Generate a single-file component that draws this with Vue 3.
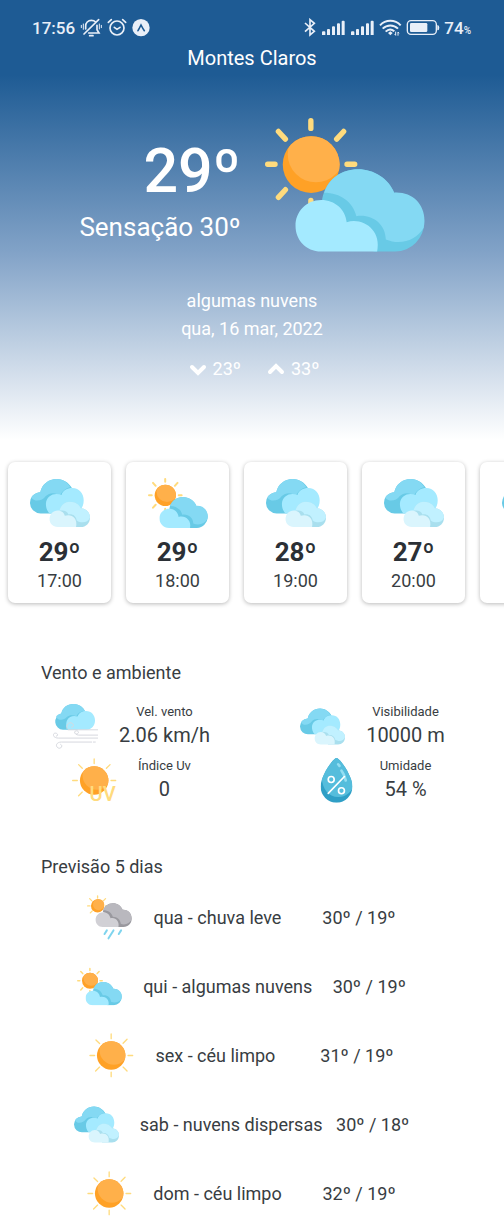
<script setup>
const hours = [
  { icon: 'clouds', temp: 29, time: '17:00' },
  { icon: 'partly', temp: 29, time: '18:00' },
  { icon: 'clouds', temp: 28, time: '19:00' },
  { icon: 'clouds', temp: 27, time: '20:00' },
  { icon: 'clouds', temp: 25, time: '21:00' },
]

const conditions = [
  { icon: 'wind', label: 'Vel. vento', value: '2.06 km/h' },
  { icon: 'clouds', label: 'Visibilidade', value: '10000 m' },
  { icon: 'uv', label: 'Índice Uv', value: '0' },
  { icon: 'drop', label: 'Umidade', value: '54 %' },
]

const days = [
  { icon: 'rain', text: 'qua - chuva leve', range: '30º / 19º' },
  { icon: 'partly', text: 'qui - algumas nuvens', range: '30º / 19º' },
  { icon: 'sun', text: 'sex - céu limpo', range: '31º / 19º' },
  { icon: 'clouds', text: 'sab - nuvens dispersas', range: '30º / 18º' },
  { icon: 'sun', text: 'dom - céu limpo', range: '32º / 19º' },
]
</script>

<template>
  <svg class="sprite" aria-hidden="true">
    <defs>
      <clipPath id="sun-clip"><circle cx="183" cy="178" r="85" /></clipPath>
      <clipPath id="sun-small-clip"><circle cx="153" cy="107" r="43" /></clipPath>
      <clipPath id="uv-clip"><circle cx="193" cy="373" r="43" /></clipPath>
      <clipPath id="drop-clip">
        <path d="M168 200C178 200 216 254 216 286A48 49 0 0 1 120 286C120 254 158 200 168 200Z" />
      </clipPath>
    </defs>

    <symbol id="cloud-pair" viewBox="135 190 388 250">
      <path class="c-shade" d="M215 290C220 233 264 192 323 192C370 192 414 220 431 262A88 88 0 1 1 434 438H370Z" />
      <path class="c-main" d="M222 262C270 262 308 290 318 332C365 325 405 355 406 402C450 420 497 405 519 367C532 305 490 258 431 262C414 220 370 192 323 192C274 192 236 220 222 262Z" />
      <path class="c-front" d="M213 438C166 438 136 402 136 361C136 320 168 284 213 284C254 284 285 312 289 350C338 335 394 374 380 438Z" />
    </symbol>

    <symbol id="partly" viewBox="45 0 478 478">
      <g class="rays" stroke-width="16">
        <path d="M182 47V70M53 177H75M290 177H313M182 285V300M85 79L106 102M280 79L259 102M106 253L85 276" />
      </g>
      <circle class="sun-dark" cx="183" cy="178" r="85" />
      <circle class="sun-light" cx="197" cy="147" r="84" clip-path="url(#sun-clip)" />
      <use href="#cloud-pair" x="135" y="190" width="388" height="250" />
    </symbol>

    <symbol id="clouds" viewBox="87 68 181 181">
      <path class="c-shade" d="M120 190A32 32 0 0 1 118 126C123 102 143 86 168 86C187 86 204 97 214 114L180 190Z" />
      <path class="c-main" d="M91 142C101 158 126 151 134 138C148 124 166 128 178 136C184 121 198 113 209 111C199 95 185 86 168 86C143 86 123 102 118 126C104 128 94 134 91 142Z" />
      <path class="c-front" d="M146 190C137 181 135 170 135 160C137 136 160 126 182 134C186 120 199 113 215 113C236 113 249 130 249 150C249 169 240 181 228 190Z" />
      <path class="c-pale-shade" d="M176 186C177 168 191 155 207 155C224 155 236 164 240 174C257 175 268 187 268 202C268 219 256 231 240 231H200Z" />
      <path class="c-pale" d="M176 182C180 165 192 155 207 155C224 155 236 164 240 174C257 175 268 187 268 202C263 217 243 222 228 211C226 196 213 190 203 193C200 183 188 179 176 182Z" />
      <path class="c-white" d="M171 231C155 231 146 220 146 207C146 193 156 181 171 181C182 181 190 188 192 197C211 190 232 203 226 231Z" />
    </symbol>

    <symbol id="sun" viewBox="86 39 136 136">
      <path class="rays" stroke-width="4" d="M153 42V56M153 157V171M89 107H103M204 107H218M107 60L118 71M201 58L189 70M106 154L118 142M201 154L189 142" />
      <circle class="sun-dark" cx="153" cy="107" r="43" />
      <circle class="sun-light" cx="161" cy="92" r="43" clip-path="url(#sun-small-clip)" />
    </symbol>

    <symbol id="rain" viewBox="171 134 136 136">
      <path class="rays" stroke-width="4" d="M203 137V143M173 167H180M226 167H233M179 145L185 151M227 145L221 151M187 182L181 188" />
      <circle class="sun-dark" cx="203" cy="167" r="20" />
      <circle class="sun-light" cx="206" cy="163" r="17" />
      <path class="g-shade" d="M219 184C223 168 235 159 249 159C263 159 274 167 279 179C295 178 306 190 306 205C306 220 296 230 281 231H260Z" />
      <path class="g-main" d="M220 180C235 180 246 188 249 200C263 200 272 209 273 221C286 227 301 219 305 209C308 190 295 178 279 179C274 167 263 159 249 159C235 159 224 168 220 180Z" />
      <path class="g-front" d="M219 231C205 231 197 220 197 209C197 196 207 186 220 186C232 186 240 194 242 204C257 200 270 213 266 231Z" />
      <path class="rain-lines" d="M231 241L224 252M251 241L236 265M274 241L267 252" />
    </symbol>

    <symbol id="wind" viewBox="66 144 136 136">
      <path class="c-shade" d="M96 222A25 25 0 0 1 91 173C95 155 109 144 127 144C144 144 158 153 164 168L140 222Z" />
      <path class="c-main" d="M75 183C84 196 100 192 107 184C117 176 128 178 137 181C140 172 151 165 162 165C155 151 142 144 127 144C109 144 95 155 91 173C83 174 77 178 75 183Z" />
      <path class="c-front" d="M112 222C104 212 105 200 109 192C115 182 127 178 140 182C145 170 155 165 166 165C182 165 193 178 193 193C193 209 183 221 167 222Z" />
      <path class="gusts" d="M108 218C105 207 113 199 121 201C130 203 130 214 122 214M201 222H112M201 238H144C132 238 126 226 137 225C145 225 145 235 138 234M201 247H82C65 247 63 232 73 232C82 232 82 242 76 241M183 259H91C77 259 71 271 82 277C90 281 98 269 89 266M188 259H194" />
    </symbol>

    <symbol id="uv" viewBox="126 305 136 136">
      <path class="rays" stroke-width="4" d="M193 308V322M128 373H142M244 373H258M146 325L157 336M241 325L230 336M146 419L157 408" />
      <circle class="sun-dark" cx="193" cy="373" r="43" />
      <circle class="sun-light" cx="201" cy="358" r="43" clip-path="url(#uv-clip)" />
      <text class="uv-text" x="179" y="435">UV</text>
    </symbol>

    <symbol id="drop" viewBox="100 200 136 136">
      <g clip-path="url(#drop-clip)">
        <path class="drop-dark" d="M100 200H236V336H100Z" />
        <path class="drop-main" d="M100 200H236V276C216 282 212 318 174 318C142 318 126 290 124 264L100 270Z" />
        <path class="drop-shine" d="M173 219L177 224M183 238L190 250L196 268" />
      </g>
      <g class="drop-sign">
        <circle cx="152" cy="265" r="9" />
        <circle cx="183" cy="299" r="9" />
        <path d="M192 256L143 307" />
      </g>
    </symbol>

    <symbol id="signal" viewBox="213 54 75 60">
      <path fill="currentColor" d="M216 97q0-3 3-3h4q3 0 3 3v8h-10ZM231 90q0-3 3-3h3q3 0 3 3v15h-9ZM246 82q0-3 3-3h3q3 0 3 3v23h-9ZM261 73q0-3 3-3h3q3 0 3 3v32h-9ZM275 65q0-3 3-3h3q3 0 3 3v40h-9Z" />
    </symbol>
  </svg>

  <main class="app">
    <header class="hero">
      <div class="status">
        <div class="status-side">
          <span class="clock">17:56</span>
          <svg class="bell" viewBox="236 54 66 60" fill="none" stroke="currentColor" stroke-width="5" stroke-linecap="round">
            <path d="M253 87V78C253 69 260 61 270 61C276 61 280 63 283 66M287 76V89L293 99H262M248 102L292 59" />
            <path d="M240 76V83M246 72V88M294 72V87M300 76V83" stroke-width="3" />
            <path d="M265 107H275" />
          </svg>
          <svg class="alarm" viewBox="319 54 60 60" fill="none" stroke="currentColor" stroke-width="5" stroke-linecap="round">
            <circle cx="349" cy="84" r="21" />
            <path d="M323 67L332 59M375 67L366 59M341 82L349 88L358 82" />
          </svg>
          <svg class="badge" viewBox="394 54 57 60">
            <circle cx="421" cy="83" r="26" fill="currentColor" />
            <path class="badge-mark" d="M412 92C415 87 418 81 421 75C424 81 427 87 431 92" />
          </svg>
        </div>
        <div class="status-side right">
          <svg class="bluetooth" viewBox="159 54 42 60" fill="none" stroke="currentColor" stroke-width="5">
            <path d="M165 69L193 94L180 105V59L193 70L165 95" />
          </svg>
          <svg class="bars"><use href="#signal" /></svg>
          <svg class="bars"><use href="#signal" /></svg>
          <svg class="wifi" viewBox="384 54 69 60" fill="none" stroke="currentColor" stroke-width="6">
            <path d="M387 76C404 58 432 58 449 76M395 86C408 73 428 73 441 86M404 95C412 87 422 87 430 94" />
            <path d="M411 99L418 94L425 99L418 106Z" fill="currentColor" stroke="none" />
            <path d="M434 95V106M431 102L434 106M441 107V96M444 100L441 96" stroke-width="3" />
          </svg>
          <svg class="battery" viewBox="468 54 102 60">
            <rect x="472" y="62" width="87" height="41" rx="11" fill="none" stroke="currentColor" stroke-width="4" />
            <rect x="480" y="69" width="52" height="27" rx="4" fill="currentColor" />
            <path d="M562 75Q568 75 568 83Q568 91 562 91Z" fill="currentColor" />
          </svg>
          <span class="charge">74<small>%</small></span>
        </div>
      </div>
      <h1>Montes Claros</h1>
      <div class="now">
        <div class="now-text">
          <p class="now-temp">29º</p>
          <p class="feels">Sensação 30º</p>
        </div>
        <svg class="now-icon" aria-hidden="true"><use href="#partly" /></svg>
      </div>
      <p class="line">algumas nuvens</p>
      <p class="line">qua, 16 mar, 2022</p>
      <div class="limits">
        <span class="limit">
          <svg viewBox="0 0 18 14"><path d="M3 5L9 11L15 5" /></svg>23º
        </span>
        <span class="limit">
          <svg viewBox="0 0 18 14"><path d="M3 10L9 4L15 10" /></svg>33º
        </span>
      </div>
    </header>

    <ul class="hours">
      <li v-for="h in hours" :key="h.time" class="hour">
        <svg class="hour-icon" aria-hidden="true"><use :href="'#' + h.icon" /></svg>
        <strong>{{ h.temp }}º</strong>
        <span>{{ h.time }}</span>
      </li>
    </ul>

    <section class="block">
      <h2>Vento e ambiente</h2>
      <dl class="conditions">
        <div v-for="c in conditions" :key="c.label" class="condition">
          <svg class="icon" aria-hidden="true"><use :href="'#' + c.icon" /></svg>
          <div class="condition-text">
            <dt>{{ c.label }}</dt>
            <dd>{{ c.value }}</dd>
          </div>
        </div>
      </dl>
    </section>

    <section class="block">
      <h2>Previsão 5 dias</h2>
      <ul class="days">
        <li v-for="d in days" :key="d.text" class="day">
          <div class="day-main">
            <svg class="icon" aria-hidden="true"><use :href="'#' + d.icon" /></svg>
            <span>{{ d.text }}</span>
          </div>
          <span>{{ d.range }}</span>
        </li>
      </ul>
    </section>
  </main>
</template>

<style>
body {
  margin: 0;
  background: #fff;
}
</style>

<style scoped>
.sprite {
  position: absolute;
  width: 0;
  height: 0;
}
.app {
  font-family: Roboto, "Liberation Sans", sans-serif;
  color: #383d42;
}
h1, h2, p, ul, dl, dd {
  margin: 0;
  padding: 0;
}
ul {
  list-style: none;
}
svg {
  display: block;
  flex: none;
}

.sun-dark { fill: #ffa126; }
.sun-light { fill: #ffb04a; }
.rays { fill: none; stroke: #ffdb7d; stroke-linecap: round; }
.c-shade { fill: #68cae6; }
.c-main { fill: #84d9f3; }
.c-front { fill: #a4eaff; }
.c-pale-shade { fill: #a9dfee; }
.c-pale { fill: #c1f1ff; }
.c-white { fill: #daf5fd; }
.g-shade { fill: #99989e; }
.g-main { fill: #b9b8be; }
.g-front { fill: #d1d0d5; }
.rain-lines { fill: none; stroke: #7fd4ee; stroke-width: 6; stroke-linecap: round; }
.gusts { fill: none; stroke: #d6d8de; stroke-width: 3; stroke-linecap: round; }
.uv-text { font: 500 61px Roboto, sans-serif; fill: #ffdb7d; }
.drop-dark { fill: #2f9fc6; }
.drop-main { fill: #55bddc; }
.drop-shine { fill: none; stroke: #93def2; stroke-width: 8; stroke-linecap: round; }
.drop-sign { fill: none; stroke: #fff; stroke-width: 5; stroke-linecap: round; }

.hero {
  color: #fff;
  background: linear-gradient(#1e5b94 0, #1e5b94 17%, #81a2c7 57%, #fff 100%);
  padding-bottom: 57px;
  text-align: center;
}
.status {
  display: flex;
  justify-content: space-between;
  align-items: center;
  padding: 18px 33px 0 32px;
  color: #e9eff8;
}
.status-side {
  display: flex;
  align-items: center;
  gap: 5px;
}
.status-side.right {
  gap: 4px;
}
.clock, .charge {
  font-size: 17px;
  line-height: 20px;
  font-weight: 500;
}
.charge small {
  font-size: 10px;
  line-height: 1;
}
.bell { width: 22px; height: 20px; }
.alarm { width: 20px; height: 20px; }
.badge { width: 19px; height: 20px; }
.badge-mark { fill: none; stroke: #1e5b94; stroke-width: 5; stroke-linecap: round; }
.bluetooth { width: 14px; height: 20px; }
.bars { width: 25px; height: 20px; }
.wifi { width: 23px; height: 20px; }
.battery { width: 34px; height: 20px; }

h1 {
  margin-top: 8px;
  font-size: 20px;
  line-height: 24px;
  font-weight: 400;
}
.now {
  display: flex;
  justify-content: center;
  align-items: center;
  gap: 24px;
  margin-top: 35px;
}
.now-icon {
  width: 160px;
  height: 160px;
}
.now-text {
  padding-top: 8px;
  text-align: right;
}
.now-temp {
  font-size: 61px;
  line-height: 76px;
  font-weight: 500;
}
.feels {
  font-size: 26px;
  line-height: 36px;
}
.now + .line {
  margin-top: 22px;
}
.line {
  font-size: 18px;
  line-height: 28px;
}
.limits {
  display: flex;
  justify-content: center;
  gap: 26px;
  margin-top: 12px;
  padding-left: 4px;
}
.limit {
  display: flex;
  align-items: center;
  gap: 6px;
  font-size: 18px;
  line-height: 28px;
}
.limit svg {
  width: 18px;
  height: 14px;
  fill: none;
  stroke: #fff;
  stroke-width: 4;
  stroke-linecap: round;
}

.hours {
  display: flex;
  gap: 15px;
  padding: 22px 8px 10px;
  overflow-x: auto;
  scrollbar-width: none;
}
.hour {
  flex: none;
  box-sizing: border-box;
  width: 103px;
  padding: 11px 0 9px;
  display: flex;
  flex-direction: column;
  align-items: center;
  border-radius: 7px;
  background: #fff;
  box-shadow: 0 1px 4px rgba(0, 0, 0, 0.28);
}
.hour-icon {
  width: 60px;
  height: 60px;
}
.hour strong {
  margin-top: 3px;
  color: #2b3036;
  font-size: 26px;
  line-height: 32px;
  font-weight: 700;
}
.hour span {
  font-size: 18px;
  line-height: 26px;
}

.block {
  margin-top: 48px;
}
h2 {
  padding-left: 41px;
  font-size: 18px;
  line-height: 24px;
  font-weight: 400;
}
.conditions {
  display: grid;
  grid-template-columns: 1fr 1fr;
  padding: 14px 11px 0;
}
.condition {
  display: flex;
  justify-content: center;
  align-items: center;
  gap: 21px;
  height: 54px;
}
.condition-text {
  text-align: center;
}
.icon {
  width: 45px;
  height: 45px;
}
dt {
  font-size: 13px;
  line-height: 18px;
}
dd {
  font-size: 20px;
  line-height: 28px;
}
.days {
  display: grid;
  gap: 24px;
  padding: 16px 88px 8px 67px;
}
.day {
  display: flex;
  justify-content: space-around;
  align-items: center;
  font-size: 18px;
  line-height: 24px;
  white-space: nowrap;
}
.day-main {
  display: flex;
  align-items: center;
  gap: 21px;
}
</style>
